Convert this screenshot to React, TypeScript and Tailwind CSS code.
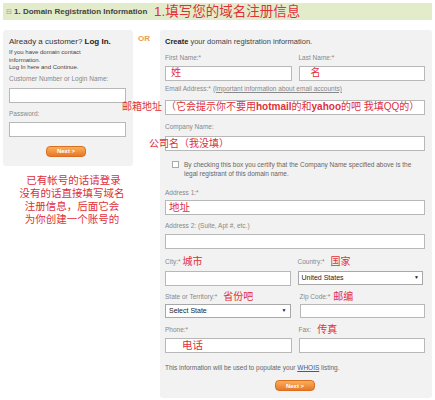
import React from "react";

const RED = "text-[#e0303a]";

function Label({ children, extra }: { children: React.ReactNode; extra?: React.ReactNode }) {
  return (
    <div className="flex items-center h-[7px] text-[6.5px] text-[#888] leading-none gap-[6px] whitespace-nowrap">
      <span>{children}</span>
      {extra}
    </div>
  );
}

function Input({ children, w = "w-full", h = "h-[15px]" }: { children?: React.ReactNode; w?: string; h?: string }) {
  return (
    <div className={`${w} ${h} bg-white border border-[#b8b8b8] flex items-center px-[3px] text-[10px] leading-none overflow-hidden ${RED}`}>
      {children}
    </div>
  );
}

function Select({ value }: { value: string }) {
  return (
    <div className="w-full h-[14px] bg-white border border-[#a8a8a8] flex items-center justify-between px-[3px] text-[7px] text-[#222] leading-none">
      <span>{value}</span>
      <span className="text-[5px]">▼</span>
    </div>
  );
}

function NextBtn() {
  return (
    <div className="w-[40px] h-[11px] rounded-[4px] bg-gradient-to-b from-[#f9b057] to-[#e8772a] border border-[#d86e20] flex items-center justify-center text-white text-[6px] font-bold leading-none">
      Next &gt;
    </div>
  );
}

export default function App() {
  return (
    <div className="w-[435px] h-[400px] bg-white overflow-hidden relative" style={{ fontFamily: '"Liberation Sans", Arial, "Noto Sans CJK SC", sans-serif' }}>
      {/* header */}
      <div className="mx-[3px] mt-[3px] h-[17px] flex items-center bg-[#e2ecca]">
        <div className="flex items-center pl-[3px] gap-[2px] text-[8px] font-bold text-[#444] leading-none w-[151px] shrink-0 whitespace-nowrap">
          <span className="text-[7px] text-[#9a9a9a] font-normal">⊟</span>
          <span>1. Domain Registration Information</span>
        </div>
        <span className={`text-[13.5px] leading-none ${RED} whitespace-nowrap`}>1.填写您的域名注册信息</span>
      </div>

      <div className="flex mt-[10px] px-[3px]">
        {/* left column */}
        <div className="w-[130px] shrink-0 flex flex-col">
          <div className="bg-[#f2f2f2] rounded-[3px] pt-[8px] pb-[9px] px-[6px] flex flex-col">
            <div className="text-[8px] leading-none text-[#333]">
              Already a customer? <b className="text-[#222]">Log In.</b>
            </div>
            <div className="text-[6px] leading-[7.5px] text-[#444] mt-[3px]">
              If you have domain contact
              <br />
              information.
              <br />
              Log In here and Continue.
            </div>
            <div className="text-[6.5px] leading-none text-[#888] mt-[4px]">Customer Number or Login Name:</div>
            <div className="mt-[6px] w-[117px] h-[15px] bg-white border border-[#b8b8b8]" />
            <div className="text-[6.5px] leading-none text-[#888] mt-[8px]">Password:</div>
            <div className="mt-[4px] w-[117px] h-[15px] bg-white border border-[#b8b8b8]" />
            <div className="flex justify-center mt-[9px] pr-[4px]">
              <NextBtn />
            </div>
          </div>
          <div className={`mt-[8px] text-center text-[10.5px] leading-[13px] ${RED} pl-[8px]`}>
            &nbsp;已有帐号的话请登录
            <br />
            没有的话直接填写域名
            <br />
            注册信息，后面它会
            <br />
            为你创建一个账号的
          </div>
        </div>

        {/* OR */}
        <div className="w-[27px] shrink-0 pl-[5px] pt-[5px] text-[8px] font-bold text-[#e8a050] leading-none">OR</div>

        {/* right panel */}
        <div className="flex-1 min-w-0 bg-[#f2f2f2] rounded-[3px] pl-[5px] pr-[7px] pt-[8px] pb-[7px] flex flex-col">
          <div className="text-[7.5px] leading-none text-[#444]">
            <b className="text-[#222]">Create</b> your domain registration information.
          </div>

          <div className="flex gap-[7px] mt-[9px]">
            <div className="flex-1 flex flex-col gap-[4px]">
              <Label>First Name:*</Label>
              <Input><span className="pl-[2px]">姓</span></Input>
            </div>
            <div className="flex-1 flex flex-col gap-[4px]">
              <Label>Last Name:*</Label>
              <Input><span className="pl-[8px]">名</span></Input>
            </div>
          </div>

          <div className="flex flex-col gap-[7px] mt-[5px] relative">
            <Label extra={<span className="underline text-[#888] -ml-[4px]">(Important information about email accounts)</span>}>Email Address:*</Label>
            <div className="w-full h-[15px] bg-white border border-[#b8b8b8] flex items-center overflow-hidden">
              <span className={`text-[10px] leading-none whitespace-nowrap ${RED}`}>（它会提示你不要用<b>hotmail</b>的和<b>yahoo</b>的吧 我填QQ的）</span>
            </div>
            <span className={`absolute left-[-43px] top-[16px] text-[10px] leading-none whitespace-nowrap ${RED}`}>邮箱地址</span>
          </div>

          <div className="flex flex-col gap-[5px] mt-[9px] relative">
            <Label>Company Name:</Label>
            <Input />
            <span className={`absolute left-[-16px] top-[15px] text-[10px] leading-none whitespace-nowrap ${RED}`}>公司名（我没填）</span>
          </div>

          <div className="flex gap-[5px] mt-[9px] pl-[7px]">
            <div className="w-[7px] h-[7px] border border-[#aaa] bg-white mt-[1px] shrink-0" />
            <div className="text-[6.5px] leading-[9px] text-[#666] whitespace-nowrap">
              By checking this box you certify that the Company Name specified above is the
              <br />
              legal registrant of this domain name.
            </div>
          </div>

          <div className="flex flex-col gap-[3px] mt-[12px]">
            <Label>Address 1:*</Label>
            <Input><span className="text-[10.5px]">地址</span></Input>
          </div>

          <div className="flex flex-col gap-[4px] mt-[8px]">
            <Label>Address 2: (Suite, Apt #, etc.)</Label>
            <Input />
          </div>

          <div className="flex gap-[7px] mt-[10px]">
            <div className="flex-1 flex flex-col gap-[5px]">
              <Label extra={<span className={`text-[10px] ${RED} -ml-[4px]`}>城市</span>}>City:*</Label>
              <Input />
            </div>
            <div className="flex-1 flex flex-col gap-[5px] pr-[2px]">
              <Label extra={<span className={`text-[10px] ${RED}`}>国家</span>}>Country:*</Label>
              <Select value="United States" />
            </div>
          </div>

          <div className="flex gap-[7px] mt-[8px]">
            <div className="flex-1 flex flex-col gap-[3px] pr-[2px]">
              <Label extra={<span className={`text-[10px] ${RED}`}>省份吧</span>}>State or Territory:*</Label>
              <Select value="Select State" />
            </div>
            <div className="flex-1 flex flex-col gap-[3px]">
              <Label extra={<span className={`text-[10px] ${RED} -ml-[3px]`}>邮编</span>}>Zip Code:*</Label>
              <Input h="h-[14px]" />
            </div>
          </div>

          <div className="flex gap-[7px] mt-[9px]">
            <div className="flex-1 flex flex-col gap-[4px]">
              <Label>Phone:*</Label>
              <Input><span className="pl-[13px] text-[10.5px]">电话</span></Input>
            </div>
            <div className="flex-1 flex flex-col gap-[4px]">
              <Label extra={<span className={`text-[10px] ${RED}`}>传真</span>}>Fax:</Label>
              <Input />
            </div>
          </div>

          <div className="text-[6.5px] leading-none text-[#666] mt-[12px]">
            This information will be used to populate your <span className="underline text-[#3a5aa8]">WHOIS</span> listing.
          </div>

          <div className="flex justify-center mt-[9px]">
            <NextBtn />
          </div>
        </div>
      </div>
    </div>
  );
}
